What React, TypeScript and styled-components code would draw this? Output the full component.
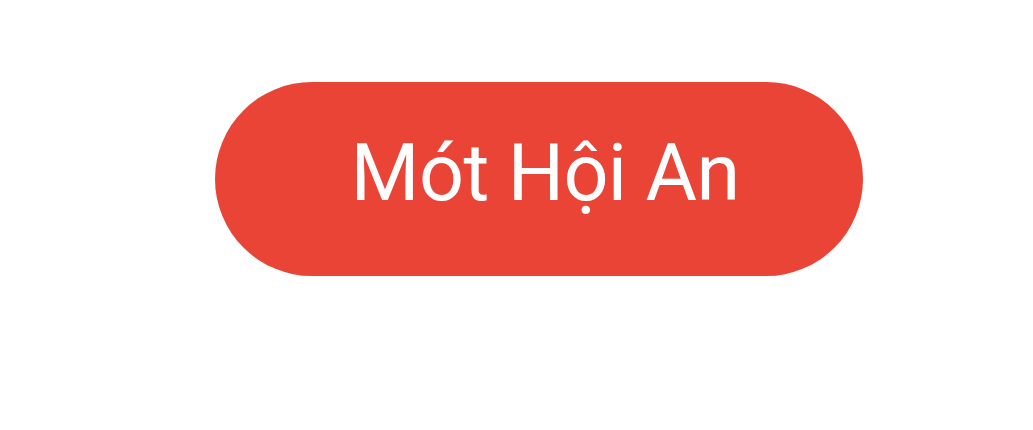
import React from "react";
import styled, { createGlobalStyle } from "styled-components";

const GlobalStyle = createGlobalStyle`
  html, body {
    margin: 0;
    padding: 0;
    background: #ffffff;
  }
`;

export default function App() {
  return (
    <>
      <GlobalStyle />
      <Page>
        <PillButton>Mót Hội An</PillButton>
      </Page>
    </>
  );
}

const Page = styled.div`
  width: 1033px;
  height: 430px;
  box-sizing: border-box;
  padding: 82px 0 0 215px;
`;

const PillButton = styled.button`
  display: flex;
  align-items: center;
  justify-content: center;
  width: 648px;
  height: 194px;
  padding: 0 0 12px 12px;
  border: none;
  border-radius: 97px;
  background: #e94435;
  color: #ffffff;
  font-family: Roboto, "Liberation Sans", sans-serif;
  font-size: 79px;
  letter-spacing: -0.6px;
  font-weight: 400;
  cursor: pointer;
`;
